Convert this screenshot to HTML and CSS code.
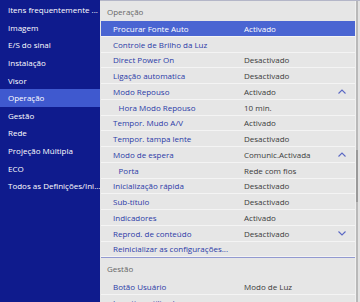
FILE: index.html
```html
<!DOCTYPE html>
<html lang="pt">
<head>
<meta charset="utf-8">
<title>Operação</title>
<link rel="stylesheet" href="styles.css">
</head>
<body>
<div class="app">
  <nav class="side">
    <div class="side-item">Itens frequentemente ...</div>
    <div class="side-item">Imagem</div>
    <div class="side-item">E/S do sinal</div>
    <div class="side-item">Instalação</div>
    <div class="side-item">Visor</div>
    <div class="side-item active">Operação</div>
    <div class="side-item">Gestão</div>
    <div class="side-item">Rede</div>
    <div class="side-item">Projeção Múltipla</div>
    <div class="side-item">ECO</div>
    <div class="side-item">Todos as Definições/Ini...</div>
  </nav>
  <main class="main">
    <div class="list">
      <div class="section-head">Operação</div>
      <div class="row selected"><span class="label">Procurar Fonte Auto</span><span class="value">Activado</span></div>
      <div class="row"><span class="label">Controle de Brilho da Luz</span><span class="value"></span></div>
      <div class="row"><span class="label">Direct Power On</span><span class="value">Desactivado</span></div>
      <div class="row"><span class="label">Ligação automatica</span><span class="value">Desactivado</span></div>
      <div class="row"><span class="label">Modo Repouso</span><span class="value">Activado</span><svg class="chev" viewBox="0 0 8 5"><polyline points="0.5,4.5 4,1 7.5,4.5"/></svg></div>
      <div class="row sub"><span class="label">Hora Modo Repouso</span><span class="value">10 min.</span></div>
      <div class="row"><span class="label">Tempor. Mudo A/V</span><span class="value">Activado</span></div>
      <div class="row"><span class="label">Tempor. tampa lente</span><span class="value">Desactivado</span></div>
      <div class="row"><span class="label">Modo de espera</span><span class="value">Comunic.Activada</span><svg class="chev" viewBox="0 0 8 5"><polyline points="0.5,4.5 4,1 7.5,4.5"/></svg></div>
      <div class="row sub"><span class="label">Porta</span><span class="value">Rede com fios</span></div>
      <div class="row"><span class="label">Inicialização rápida</span><span class="value">Desactivado</span></div>
      <div class="row"><span class="label">Sub-título</span><span class="value">Desactivado</span></div>
      <div class="row"><span class="label">Indicadores</span><span class="value">Activado</span></div>
      <div class="row"><span class="label">Reprod. de conteúdo</span><span class="value">Desactivado</span><svg class="chev" viewBox="0 0 8 5"><polyline points="0.5,0.5 4,4 7.5,0.5"/></svg></div>
      <div class="row"><span class="label">Reinicializar as configurações...</span><span class="value"></span></div>
      <div class="section-head divided">Gestão</div>
      <div class="row"><span class="label">Botão Usuário</span><span class="value">Modo de Luz</span></div>
      <div class="row"><span class="label">Logotipo utilizador</span><span class="value"></span></div>
    </div>
    <div class="scroll"><div class="thumb"></div></div>
  </main>
</div>
</body>
</html>
```
FILE: styles.css
```css
* { box-sizing: border-box; }
html, body { margin: 0; padding: 0; }
body {
  width: 360px;
  height: 302px;
  overflow: hidden;
  font-family: "Open Sans", "Noto Sans", sans-serif;
  font-size: 8px;
  background: #e6e6e6;
}
.app {
  display: flex;
  height: 302px;
}
.side {
  width: 100px;
  flex: none;
  background: #0f1b8d;
  padding-top: 1px;
}
.side-item {
  height: 17.6px;
  display: flex;
  align-items: center;
  padding-left: 8px;
  color: #ffffff;
  white-space: nowrap;
  overflow: hidden;
}
.side-item.active { background: #3f59cf; }
.main {
  flex: 1;
  display: flex;
  background: #e6e6e6;
  border-top: 1px solid #b4b6c8;
  overflow: hidden;
}
.list {
  flex: 1;
  padding-left: 1px;
}
.section-head {
  height: 20px;
  display: flex;
  align-items: center;
  padding-left: 6px;
  color: #676767;
}
.section-head.divided {
  border-top: 1px solid #9299d0;
  height: 22px;
}
.row {
  height: 15.75px;
  display: flex;
  align-items: center;
  border-bottom: 1px solid #f4f4f4;
  padding-left: 12px;
  color: #2b3aa6;
  white-space: nowrap;
}
.row .label { width: 131px; flex: none; }
.row .value { flex: 1; color: #3b3b3b; }
.row.sub { padding-left: 17.5px; }
.row.sub .label { width: 125.5px; }
.row.selected { background: #4a65d2; color: #ffffff; }
.row.selected .value { color: #ffffff; }
.chev {
  width: 8px;
  height: 5px;
  margin-right: 9px;
  fill: none;
  stroke: #5a68c4;
  stroke-width: 1.1;
}
.scroll {
  width: 5px;
  flex: none;
  border-left: 1px solid #f0f0f0;
  background: linear-gradient(to right, #b9b9b9 0 2px, #e2e2e2 2px);
  padding-top: 149px;
}
.thumb {
  width: 2px;
  height: 52px;
  background: #9a9a9a;
}
```
